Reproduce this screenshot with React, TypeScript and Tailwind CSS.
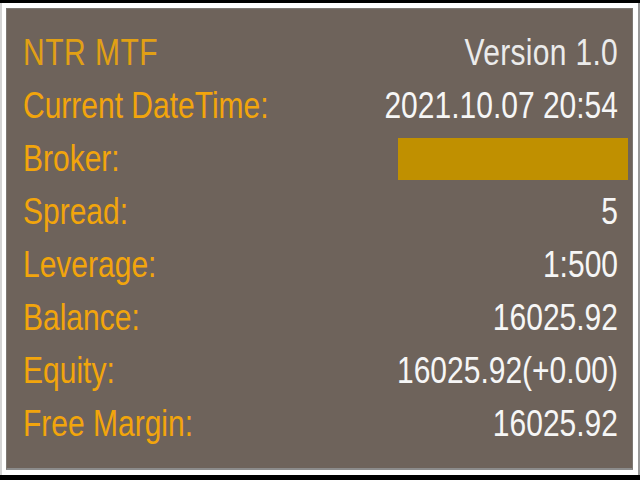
import React from "react";

const rows: { label: string; value?: string; box?: boolean }[] = [
  { label: "Current DateTime:", value: "2021.10.07 20:54" },
  { label: "Broker:", box: true },
  { label: "Spread:", value: "5" },
  { label: "Leverage:", value: "1:500" },
  { label: "Balance:", value: "16025.92" },
  { label: "Equity:", value: "16025.92(+0.00)" },
  { label: "Free Margin:", value: "16025.92" },
];

export default function App() {
  return (
    <div
      className="w-[640px] h-[480px] bg-black pt-[3px] pb-[5px] overflow-hidden"
      style={{ fontFamily: '"Liberation Sans", Arial, sans-serif' }}
    >
      <div className="h-full bg-white border-l-2 border-r-2 border-l-[#d4d4d4] border-r-[#9a9a9a] pt-[5px] pb-[5px] pl-[4px] pr-[5px]">
        <div className="h-full bg-[#6e635b] border border-[#7d7873] border-b-2 border-b-[#8c8c8c] pt-[17px] pl-[16px] pr-[14px] flex flex-col text-[30px] leading-none">
          <div className="h-[53px] flex items-center justify-between">
            <span className="inline-block scale-y-[1.24] text-[#e8a412] tracking-[0.5px] opacity-95">NTR MTF</span>
            <span className="inline-block scale-y-[1.24] text-[#ebebeb] tracking-[0.3px]">Version 1.0</span>
          </div>
          {rows.map((r) => (
            <div key={r.label} className="h-[53px] flex items-center justify-between">
              <span className="inline-block scale-y-[1.24] text-[#f2a50c]">{r.label}</span>
              {r.box ? (
                <div className="w-[230px] h-[42px] bg-[#c09000] mr-[-10px]" />
              ) : (
                <span className="inline-block scale-y-[1.24] text-[#f6f6f6]">{r.value}</span>
              )}
            </div>
          ))}
        </div>
      </div>
    </div>
  );
}
